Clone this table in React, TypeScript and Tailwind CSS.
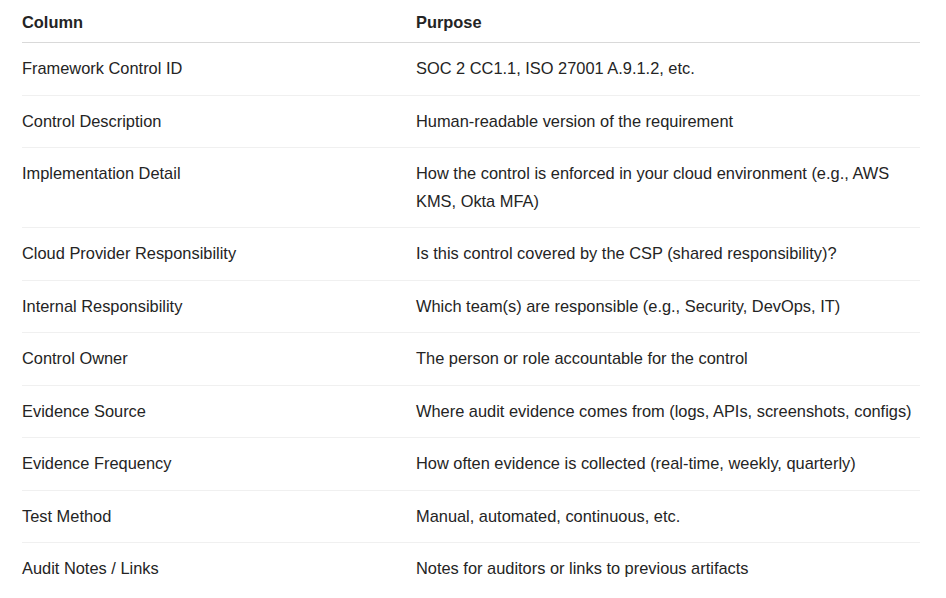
const rows: [string, string][] = [
  ['Framework Control ID', 'SOC 2 CC1.1, ISO 27001 A.9.1.2, etc.'],
  ['Control Description', 'Human-readable version of the requirement'],
  ['Implementation Detail', 'How the control is enforced in your cloud environment (e.g., AWS KMS, Okta MFA)'],
  ['Cloud Provider Responsibility', 'Is this control covered by the CSP (shared responsibility)?'],
  ['Internal Responsibility', 'Which team(s) are responsible (e.g., Security, DevOps, IT)'],
  ['Control Owner', 'The person or role accountable for the control'],
  ['Evidence Source', 'Where audit evidence comes from (logs, APIs, screenshots, configs)'],
  ['Evidence Frequency', 'How often evidence is collected (real-time, weekly, quarterly)'],
  ['Test Method', 'Manual, automated, continuous, etc.'],
  ['Audit Notes / Links', 'Notes for auditors or links to previous artifacts'],
];

export default function App() {
  return (
    <div className="min-h-screen bg-white px-[22px] text-[16.4px] leading-[27.5px] text-[#242424] [font-family:'Liberation_Sans',Arial,sans-serif]">
      <table className="w-[898px] border-collapse text-left">
        <thead>
          <tr className="border-b border-[#d9d9d9]">
            <th className="w-[394px] pt-[9px] pb-[5.5px] font-bold">Column</th>
            <th className="pt-[9px] pb-[5.5px] font-bold">Purpose</th>
          </tr>
        </thead>
        <tbody>
          {rows.map(([col, purpose]) => (
            <tr key={col} className="border-b border-[#f0f0f0] last:border-b-0">
              <td className="py-[12px] pr-4 align-top">{col}</td>
              <td className="py-[12px] align-top">{purpose}</td>
            </tr>
          ))}
        </tbody>
      </table>
    </div>
  );
}
